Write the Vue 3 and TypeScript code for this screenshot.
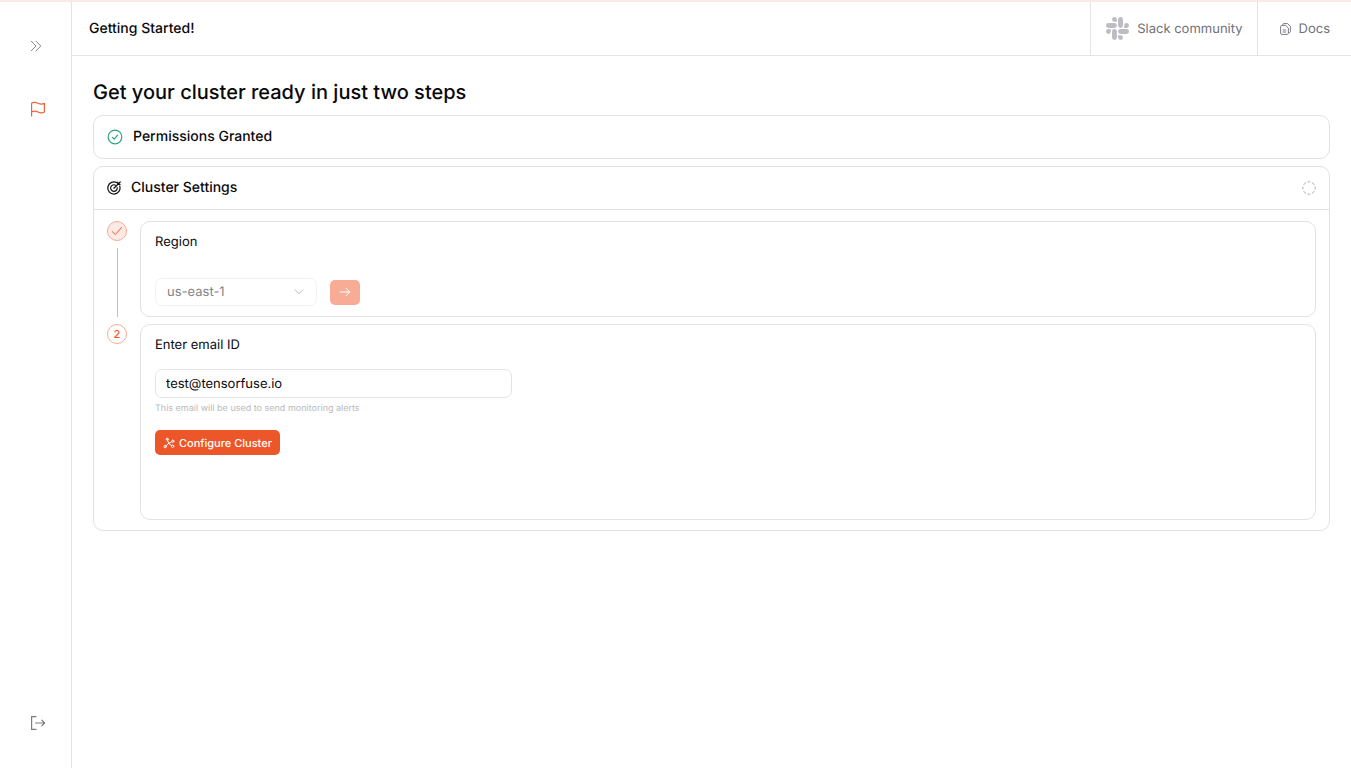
<script setup lang="ts">
import { ref } from 'vue'

const regions: string[] = ['us-east-1', 'us-east-2', 'us-west-2', 'eu-west-1']
const region = ref<string>('us-east-1')
const email = ref<string>('test@tensorfuse.io')
</script>

<template>
  <div class="app">
    <aside class="sidebar">
      <button class="icon-button" type="button" aria-label="Expand sidebar">
        <svg width="16" height="16" viewBox="0 0 16 16" fill="none" stroke="#85858c" stroke-linecap="round" stroke-linejoin="round">
          <path d="M3.3 3.2 8 8l-4.700 4.800M8 3.200 12.800 8 8 12.800" />
        </svg>
      </button>
      <a class="icon-button flag" href="#" aria-label="Getting started">
        <svg width="16" height="16" viewBox="0 0 16 16" fill="none" stroke="#f0643a" stroke-width="1.200" stroke-linecap="round" stroke-linejoin="round">
          <path d="M1.600 15V2.200C4 .7 6 1.300 8 2.300s4 1.300 6.400 0v8.700c-2.400 1.300-4.400 1-6.400 0s-4-1.400-6.400 0" />
        </svg>
      </a>
      <button class="icon-button logout" type="button" aria-label="Log out">
        <svg width="16" height="16" viewBox="0 0 16 16" fill="none" stroke="#7b7b84" stroke-width="1.200" stroke-linecap="round" stroke-linejoin="round">
          <path d="M6 1.600H1.600v12.800H6M5.600 8h9M11.800 5.200 14.600 8l-2.800 2.800" />
        </svg>
      </button>
    </aside>

    <div class="content">
      <header class="topbar">
        <h1>Getting Started!</h1>
        <a class="top-link slack" href="#">
          <svg width="23" height="23" viewBox="0 0 24 24" fill="#bcbcc2">
            <path d="M5.042 15.165a2.528 2.528 0 0 1-2.520 2.523A2.528 2.528 0 0 1 0 15.165a2.527 2.527 0 0 1 2.522-2.520h2.520v2.520zM6.313 15.165a2.527 2.527 0 0 1 2.521-2.520 2.527 2.527 0 0 1 2.521 2.520v6.313A2.528 2.528 0 0 1 8.834 24a2.528 2.528 0 0 1-2.521-2.522v-6.313zM8.834 5.042a2.528 2.528 0 0 1-2.521-2.520A2.528 2.528 0 0 1 8.834 0a2.528 2.528 0 0 1 2.521 2.522v2.520H8.834zM8.834 6.313a2.528 2.528 0 0 1 2.521 2.521 2.528 2.528 0 0 1-2.521 2.521H2.522A2.528 2.528 0 0 1 0 8.834a2.528 2.528 0 0 1 2.522-2.521h6.312zM18.956 8.834a2.528 2.528 0 0 1 2.522-2.521A2.528 2.528 0 0 1 24 8.834a2.528 2.528 0 0 1-2.522 2.521h-2.522V8.834zM17.688 8.834a2.528 2.528 0 0 1-2.523 2.521 2.527 2.527 0 0 1-2.520-2.521V2.522A2.527 2.527 0 0 1 15.165 0a2.528 2.528 0 0 1 2.523 2.522v6.312zM15.165 18.956a2.528 2.528 0 0 1 2.523 2.522A2.528 2.528 0 0 1 15.165 24a2.527 2.527 0 0 1-2.520-2.522v-2.522h2.520zM15.165 17.688a2.527 2.527 0 0 1-2.520-2.523 2.526 2.526 0 0 1 2.520-2.520h6.313A2.527 2.527 0 0 1 24 15.165a2.528 2.528 0 0 1-2.522 2.523h-6.313z" />
          </svg>
          <span>Slack community</span>
        </a>
        <a class="top-link docs" href="#">
          <svg width="11" height="12" viewBox="0 0 11 12" fill="none" stroke="#7b7b84" stroke-linecap="round" stroke-linejoin="round">
            <path d="M2.800 2v-.4A1 1 0 0 1 3.800.6h3.700l2.900 2.700v5.200a1 1 0 0 1-1 1h-.8" />
            <path d="M.6 3.400a1 1 0 0 1 1-1h4l2.800 2.700v5.300a1 1 0 0 1-1 1H1.600a1 1 0 0 1-1-1zM3 7h2.800M3 9h2.800" />
          </svg>
          <span>Docs</span>
        </a>
      </header>

      <main class="main">
        <h2 class="title">Get your cluster ready in just two steps</h2>

        <section class="card">
          <div class="card-head">
            <svg width="16" height="16" viewBox="0 0 16 16" fill="none" stroke="#2fa57c" stroke-width="1.200" stroke-linecap="round" stroke-linejoin="round">
              <circle cx="8" cy="8" r="6.800" />
              <path d="m5.400 8.400 1.800 1.700 3.400-4" />
            </svg>
            <h3>Permissions Granted</h3>
          </div>
        </section>

        <section class="card">
          <div class="card-head settings-head">
            <svg width="14" height="14" viewBox="0 0 14 14" fill="none" stroke="#111" stroke-width="1.200" stroke-linecap="round" stroke-linejoin="round">
              <path d="M10 1.700A6.100 6.100 0 1 0 12.700 5" />
              <path d="M8.600 4.200A3.300 3.300 0 1 0 10.200 6.500" />
              <path d="M6.900 7.200 13.200 1M10.700 1.200v2.200h2.300" />
            </svg>
            <h3>Cluster Settings</h3>
            <svg class="pending" width="14" height="14" viewBox="0 0 14 14" fill="none" stroke="#a8a8a8">
              <circle cx="7" cy="7" r="6.200" pathLength="64" stroke-dasharray="5 3" stroke-dashoffset="2.500" />
            </svg>
          </div>

          <ol class="steps">
            <li class="step">
              <div class="rail">
                <span class="marker done">
                  <svg width="12" height="12" viewBox="0 0 12 12" fill="none" stroke="#ed5a2d" stroke-linecap="round" stroke-linejoin="round">
                    <path d="m1.400 6.800 2.900 2.700 6.300-7" />
                  </svg>
                </span>
                <span class="line"></span>
              </div>
              <div class="panel region-panel">
                <label for="region">Region</label>
                <div class="region-row">
                  <div class="select-box">
                    <select id="region" v-model="region" disabled>
                      <option v-for="r in regions" :key="r" :value="r">{{ r }}</option>
                    </select>
                    <svg width="10" height="6" viewBox="0 0 10 6" fill="none" stroke="#bdbdbd" stroke-linecap="round" stroke-linejoin="round">
                      <path d="m1 .8 4 4 4-4" />
                    </svg>
                  </div>
                  <button class="next" type="button" aria-label="Next" disabled>
                    <svg width="12" height="10" viewBox="0 0 12 10" fill="none" stroke="#fff" stroke-linecap="round" stroke-linejoin="round">
                      <path d="M1.200 5h9.600M7.200 1.400 10.800 5 7.200 8.600" />
                    </svg>
                  </button>
                </div>
              </div>
            </li>

            <li class="step">
              <div class="rail">
                <span class="marker">2</span>
              </div>
              <div class="panel email-panel">
                <label for="email">Enter email ID</label>
                <input id="email" v-model="email" type="email" aria-describedby="email-hint" />
                <p id="email-hint" class="hint">This email will be used to send monitoring alerts</p>
                <button class="configure" type="button">
                  <svg width="12" height="12" viewBox="0 0 12 12" fill="none" stroke="#fff" stroke-linecap="round">
                    <circle cx="4.200" cy="2.200" r="1" />
                    <circle cx="2.200" cy="9.600" r="1.200" />
                    <circle cx="9.800" cy="4.200" r="1.100" />
                    <circle cx="9.600" cy="9.200" r="1.200" />
                    <path d="M4.600 3.200 5.600 6.400 3.100 8.700M5.600 6.400l3.200-1.700M5.600 6.400l3 2.200" />
                  </svg>
                  <span>Configure Cluster</span>
                </button>
              </div>
            </li>
          </ol>
        </section>
      </main>
    </div>
  </div>
</template>

<style>
body {
  margin: 0;
  background: #fff;
}
</style>

<style scoped>
* {
  box-sizing: border-box;
}

.app {
  display: flex;
  min-height: 100vh;
  border-top: 2px solid #fbe9e3;
  background: #fff;
  color: #09090b;
  font-family: Inter, "Liberation Sans", sans-serif;
  font-size: 13px;
  line-height: 20px;
  text-rendering: geometricPrecision;
}

h1,
h2,
h3,
p,
ol {
  margin: 0;
  padding: 0;
}

button,
input,
select {
  font: inherit;
  text-rendering: inherit;
}

svg {
  display: block;
  flex: none;
}

.sidebar {
  display: flex;
  flex: none;
  flex-direction: column;
  align-items: center;
  width: 72px;
  padding: 32px 0 33px;
  border-right: 1px solid #e4e4e7;
}

.icon-button {
  display: grid;
  place-items: center;
  width: 24px;
  height: 24px;
  padding: 0;
  border: 0;
  background: none;
}

.flag {
  margin-top: 39px;
  margin-left: 4px;
}

.logout {
  margin-top: auto;
  margin-left: 4px;
}

.content {
  flex: 1;
  min-width: 0;
}

.topbar {
  display: flex;
  height: 54px;
  border-bottom: 1px solid #e4e4e7;
}

h1 {
  flex: 1;
  align-self: center;
  padding-left: 17px;
  font-size: 14px;
  font-weight: 500;
}

.top-link {
  display: flex;
  align-items: center;
  gap: 8px;
  border-left: 1px solid #e4e4e7;
  color: #71717a;
  font-size: 13px;
  text-decoration: none;
}

.slack {
  padding: 0 14px 0 15px;
}

.docs {
  padding: 0 21px 0 22px;
}

.main {
  display: flex;
  flex-direction: column;
  gap: 7px;
  padding: 22px 21px;
}

.title {
  margin-bottom: 2px;
  font-size: 20px;
  font-weight: 500;
  line-height: 28px;
}

.card {
  border: 1px solid #e2e2e4;
  border-radius: 10px;
}

.card-head {
  display: flex;
  align-items: center;
  gap: 10px;
  height: 42px;
  padding: 0 13px;
}

.settings-head {
  height: 43px;
  border-bottom: 1px solid #e2e2e4;
}

h3 {
  font-size: 14px;
  font-weight: 500;
}

.pending {
  margin-left: auto;
}

.steps {
  display: flex;
  flex-direction: column;
  gap: 7px;
  padding: 11px 13px 10px;
  list-style: none;
}

.step {
  display: flex;
  gap: 13px;
}

.rail {
  display: flex;
  flex: none;
  flex-direction: column;
  align-items: center;
  gap: 7px;
  width: 20px;
}

.marker {
  display: grid;
  place-items: center;
  flex: none;
  width: 20px;
  height: 20px;
  border: 1px solid #f6ab96;
  border-radius: 50%;
  color: #ed5a2d;
  font-size: 11px;
  font-weight: 500;
  line-height: 18px;
}

.done {
  background: #fdeae5;
}

.line {
  flex: 1;
  width: 1px;
  background: #c0c0c2;
}

.panel {
  display: flex;
  flex: 1;
  flex-direction: column;
  align-items: flex-start;
  min-width: 0;
  padding: 10px 14px;
  border: 1px solid #e2e2e4;
  border-radius: 10px;
}

.region-row {
  display: flex;
  align-items: center;
  gap: 13px;
  margin-top: 26px;
}

.select-box {
  display: grid;
  align-items: center;
  width: 162px;
}

.select-box > * {
  grid-area: 1 / 1;
}

.select-box svg {
  justify-self: end;
  margin-right: 13px;
  pointer-events: none;
}

select {
  width: 100%;
  height: 28px;
  padding: 0 32px 0 11px;
  border: 1px solid #f1f1f2;
  border-radius: 7px;
  appearance: none;
  background: #fff;
  color: #848486;
  opacity: 1;
}

.next {
  display: grid;
  place-items: center;
  width: 30px;
  height: 25px;
  padding: 0;
  border: 0;
  border-radius: 5px;
  background: #f8ac96;
}

.email-panel {
  min-height: 196px;
}

input {
  width: 357px;
  max-width: 100%;
  height: 29px;
  margin-top: 14px;
  padding: 0 10px;
  border: 1px solid #e4e4e7;
  border-radius: 7px;
  background: #fff;
  color: inherit;
  outline: none;
}

.hint {
  margin-top: 4px;
  color: #b9b9bb;
  font-size: 9px;
  line-height: 13px;
}

.configure {
  display: flex;
  align-items: center;
  gap: 4px;
  height: 25px;
  margin-top: 15px;
  padding: 0 8px;
  border: 0;
  border-radius: 5px;
  background: #ed5628;
  color: #fff;
  font-size: 11px;
  font-weight: 500;
}
</style>
